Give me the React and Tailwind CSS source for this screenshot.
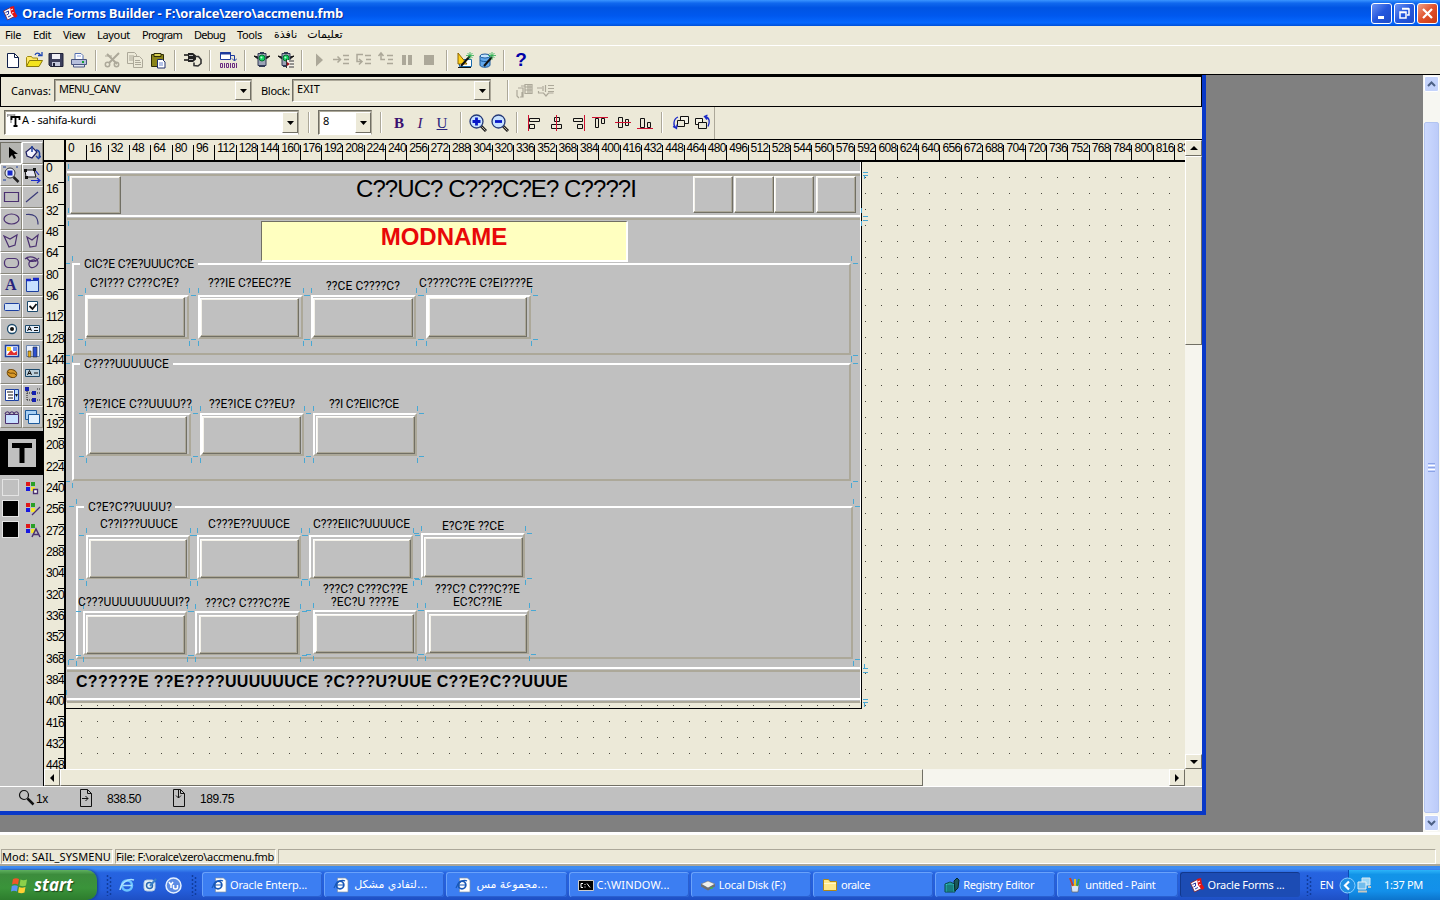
import { useLayoutEffect, useRef, useState } from 'react';

const UI = "font-['Noto_Sans','DejaVu_Sans',sans-serif] text-[11px]";

// Single line of text whose tracking is adjusted so it spans `w` pixels
function Fit({ w, className = '', children }) {
  const ref = useRef(null);
  const [spacing, setSpacing] = useState(0);
  useLayoutEffect(() => {
    const natural = ref.current.getBoundingClientRect().width;
    setSpacing((w - natural) / children.length);
  }, []);
  return (
    <span ref={ref} className={`inline-block whitespace-pre ${className}`} style={{ letterSpacing: spacing }}>
      {children}
    </span>
  );
}

function Svg({ w = 18, h = 18, className = '', children }) {
  return (
    <svg width={w} height={h} viewBox={`0 0 ${w} ${h}`} className={`shrink-0 ${className}`} fill="none">
      {children}
    </svg>
  );
}

function Sep({ className = '' }) {
  return <div className={`h-[21px] w-[2px] shrink-0 border-l border-[#aca899] bg-white ${className}`} />;
}

function OracleIcon({ className = '' }) {
  return (
    <Svg w={16} h={16} className={className}>
      <path d="M1.500 6l8-4 4 9-8 4z" fill="#f8f8ff" stroke="#7a2030" strokeWidth=".8" />
      <path d="M8 2l4-1 1 6 2.500 4-2.500 2-4-5z" fill="#e21313" />
      <path d="M3.500 7.500l3-1.500v3l-2 1M6 12l3-1.500" stroke="#2b3aa0" />
      <path d="M9 5l2-1M10 8l1.500-.5" stroke="#fff" />
    </Svg>
  );
}

function TitleBar() {
  return (
    <div className="flex h-[26px] items-center bg-[linear-gradient(#3a95ff_0%,#1068ee_12%,#0054e3_30%,#0058ee_60%,#0668ff_88%,#0050d8_100%)] pl-[2px]">
      <OracleIcon />
      <Fit w={321} className="ml-1 font-['Open_Sans',sans-serif] text-[13px] leading-[26px] font-bold text-white [text-shadow:1px_1px_0_#0a2c90]">
        {'Oracle Forms Builder - F:\\oralce\\zero\\accmenu.fmb'}
      </Fit>
      <div className="mr-[2px] ml-auto flex gap-[2px]">
        <div className="flex h-[21px] w-[21px] items-center justify-center rounded-[3px] border border-white bg-[linear-gradient(135deg,#6d94f4,#2457dd_50%,#1f4cc8)]">
          <Svg w={15} h={15}><path d="M4 11.500h6" stroke="#fff" strokeWidth="3" /></Svg>
        </div>
        <div className="flex h-[21px] w-[21px] items-center justify-center rounded-[3px] border border-white bg-[linear-gradient(135deg,#6d94f4,#2457dd_50%,#1f4cc8)]">
          <Svg w={15} h={15}>
            <path d="M5 3h7v6h-2M5 2.500h7" stroke="#fff" strokeWidth="1.500" />
            <path d="M3 6h6v6H3zM3 6.500h6" stroke="#fff" strokeWidth="1.500" />
          </Svg>
        </div>
        <div className="flex h-[21px] w-[21px] items-center justify-center rounded-[3px] border border-white bg-[linear-gradient(135deg,#f0a088,#e0502a_50%,#c83a14)]">
          <Svg w={15} h={15}><path d="M3 3l9 9M12 3l-9 9" stroke="#fff" strokeWidth="2.200" /></Svg>
        </div>
      </div>
    </div>
  );
}

const menus = [['File', 16], ['Edit', 18], ['View', 22], ['Layout', 33], ['Program', 40], ['Debug', 31], ['Tools', 25]];

function MenuBar() {
  return (
    <div className={`flex h-5 items-center gap-3 border-b border-white pb-[2px] pl-[5px] leading-[17px] text-black ${UI}`}>
      {menus.map(([name, w]) => <Fit key={name} w={w}>{name}</Fit>)}
      <span dir="rtl" className="font-['DejaVu_Sans',sans-serif] text-[11px]">نافذة</span>
      <span dir="rtl" className="-ml-[2px] font-['DejaVu_Sans',sans-serif] text-[11px]">تعليمات</span>
    </div>
  );
}

function TrafficLight() {
  return (
    <>
      <path d="M1 5l4 1v2zM17 5l-4 1v2z" fill="#111" stroke="#111" />
      <path d="M5 2.500h8v12H5z" fill="#9ca3b6" stroke="#333a55" />
      <path d="M7 1.500h4M6 15.500h6" stroke="#333a55" />
      <circle cx="9" cy="7" r="3" fill="#14d264" stroke="#04742c" />
      <circle cx="8.400" cy="6.400" r="1" fill="#b8ffd0" />
    </>
  );
}

function StepIcon({ d }) {
  return (
    <Svg className="ml-1">
      <path d="M11 4.500h6M12 8.500h5M11 12.500h6" stroke="#aca899" strokeWidth="1.500" />
      <path d={d} stroke="#aca899" strokeWidth="1.500" />
    </Svg>
  );
}

function MainToolbar() {
  return (
    <div className="flex h-7 items-center">
      <Svg className="ml-1">
        <path d="M3.500 2.500h7l4 4v10h-11z" fill="#fff" stroke="#10204a" />
        <path d="M10.500 2.500v4h4" stroke="#10204a" />
      </Svg>
      <Svg className="ml-[3px]">
        <path d="M1.500 15V6.500l1-1h4l1 1.500h5V9" fill="#ffe96a" stroke="#a08a10" />
        <path d="M1.500 15.500l3-6h13l-3.500 6z" fill="#f4e41c" stroke="#8a7a08" />
        <path d="M10 4c1-2.500 4-2.500 5.500 0M13 4.500h4V1" stroke="#1c46b4" strokeWidth="1.300" />
      </Svg>
      <Svg className="ml-1">
        <path d="M2 2.500h14v13H3.500L2 14z" fill="#3c3f5c" stroke="#202238" />
        <path d="M5 3h8v5H5z" fill="#f0f0f6" />
        <path d="M5 11h8v4H5z" fill="#c4c8dc" />
        <path d="M7 12v3" stroke="#202238" strokeWidth="2" />
      </Svg>
      <Svg className="ml-[5px]">
        <path d="M5 8V2.500h6l2 2V8" fill="#fff" stroke="#5570b0" />
        <path d="M1.500 8.500h15v5h-15z" fill="#b6bfdc" stroke="#4a5680" />
        <path d="M3.500 13.500h11v2.500h-11z" fill="#e2e6f4" stroke="#4a5680" />
        <path d="M12 11h2" stroke="#14a034" strokeWidth="2" />
        <path d="M7 5h4" stroke="#88a0e0" />
      </Svg>
      <Sep className="ml-[7px]" />
      <Svg className="ml-[6px]">
        <path d="M16 2L6 12M4 3l10 10" stroke="#aca899" strokeWidth="2" />
        <circle cx="4.500" cy="13.500" r="2.200" stroke="#aca899" strokeWidth="1.500" />
        <circle cx="13.500" cy="13.500" r="2.200" stroke="#aca899" strokeWidth="1.500" />
        <path d="M2 5h7" stroke="#aca899" />
      </Svg>
      <Svg className="ml-[5px]">
        <path d="M1.500 1.500h7l2 2v9h-9zM3 5h5M3 7h5M3 9h4" stroke="#aca899" />
        <path d="M7.500 5.500h6l3 3v8h-9z" fill="#ece9d8" stroke="#aca899" />
        <path d="M9 9.500h5M9 11.500h6M9 13.500h6" stroke="#aca899" />
      </Svg>
      <Svg className="ml-[5px]">
        <path d="M2.500 3.500h12v12h-12z" fill="#8a8418" stroke="#2e2c08" />
        <path d="M5 2.500h7v3H5z" fill="#d8cf50" stroke="#2e2c08" />
        <path d="M8.500 8.500h5l2.500 2.500v6H8.500z" fill="#fff" stroke="#20306c" />
        <path d="M10 12h4M10 14h4" stroke="#6b86d0" />
      </Svg>
      <Sep className="ml-[7px]" />
      <Svg className="ml-2">
        <path d="M0 4h5M0 9h5" stroke="#111" strokeWidth="1.500" />
        <path d="M4 2h5l3 2.500v4L9 11H4z" fill="#222" />
        <path d="M11 5.500h3.500l2.500 3v4l-3 2.500-4-.5v-3" stroke="#333" strokeWidth="1.600" />
        <path d="M5 4.500h4M5 8.500h4" stroke="#bbb" />
      </Svg>
      <Sep className="ml-[7px]" />
      <Svg className="ml-2">
        <path d="M1.500 1.500h10v7h-10z" fill="#fff" stroke="#1c3a9c" />
        <path d="M1 2.500h11" stroke="#1c3a9c" strokeWidth="2" />
        <path d="M12 4.500h3.500v5M13 7.500l2.500 2.500L18 7.500" stroke="#1c3a9c" />
        <path d="M1.500 12.500h2v4h-2zM7.500 12.500h2v4h-2zM13.500 12.500h2v4h-2zM5.500 12v5M11.500 12v5M17.500 12v5" stroke="#6a2a80" />
      </Svg>
      <Sep className="ml-[7px]" />
      <Svg className="ml-[7px]"><TrafficLight /></Svg>
      <Svg className="ml-[6px]">
        <TrafficLight />
        <path d="M9 9h8v8H9z" fill="#f4f2ea" />
        <path d="M9.500 8v9M12 10h5M13 13h4M12 16h5" stroke="#333" />
        <path d="M10 11l3 2-3 2z" fill="#a01020" />
      </Svg>
      <Sep className="ml-[6px]" />
      <Svg className="ml-[7px]"><path d="M6 2.500l7 6.500-7 6.500z" fill="#aca899" /></Svg>
      <StepIcon d="M1 8.500h7M5.500 5.500l3 3-3 3" />
      <StepIcon d="M9 3.500H3v7h5M5 8l3 2.500L5 13.500" />
      <StepIcon d="M9 8.500H5v-6M2.500 5L5 2l2.500 3" />
      <Svg className="ml-1"><path d="M6 4v10M12 4v10" stroke="#aca899" strokeWidth="4" /></Svg>
      <Svg className="ml-1"><path d="M4 4h10v10H4z" fill="#aca899" /></Svg>
      <Sep className="ml-2" />
      <Svg className="ml-2">
        <path d="M3.500 8.500h12v7h-12z" fill="#fff" stroke="#1c6cac" />
        <path d="M2 2v11h9z" fill="#ffd21a" stroke="#8c6400" />
        <path d="M5 15L14 5" stroke="#111" strokeWidth="2" />
        <path d="M14 1v8M10 4.500h8M11.500 2l5 5M16.500 2l-5 5" stroke="#2cb050" strokeWidth=".8" />
        <path d="M2 16.500h13" stroke="#111" />
      </Svg>
      <Svg className="ml-1">
        <path d="M2 5v9c0 3 10 3 10 0V5" fill="#62a8ec" stroke="#1c5a9c" />
        <ellipse cx="7" cy="5" rx="5" ry="2" fill="#c4e4ff" stroke="#1c5a9c" />
        <path d="M2 9c1 2 9 2 10 0" stroke="#1c5a9c" />
        <path d="M6 15l8-9" stroke="#111" strokeWidth="2" />
        <path d="M14 1v8M10 4.500h8M11.500 2l5 5M16.500 2l-5 5" stroke="#2cb050" strokeWidth=".8" />
      </Svg>
      <Sep className="ml-[7px]" />
      <span className="ml-[7px] w-[18px] text-center font-['Liberation_Sans',sans-serif] text-[19px] leading-5 font-bold text-[#0000a8]">?</span>
    </div>
  );
}

function Combo({ className = '', children }) {
  return (
    <div className={`flex border border-t-[#716f64] border-l-[#716f64] border-r-[#aca899] border-b-white shadow-[inset_1px_1px_0_#aca899] ${className}`}>
      <div className="flex-1 pl-1 leading-[17px]">{children}</div>
      <div className="my-[1px] flex w-4 items-center justify-center border border-t-white border-r-[#716f64] border-b-[#716f64] border-l-white bg-[#ece9d8]">
        <Svg w={7} h={4}><path d="M0 0h7L3.500 4z" fill="#000" /></Svg>
      </div>
    </div>
  );
}

function CanvasBar() {
  return (
    <div className={`flex h-8 items-center border-t-2 border-r border-b border-l border-black pb-[2px] pl-[10px] ${UI}`}>
      <Fit w={40} className="mt-[2px]">Canvas:</Fit>
      <Combo className="ml-[3px] h-[23px] w-[198px]"><Fit w={61}>MENU_CANV</Fit></Combo>
      <Fit w={29} className="mt-[2px] ml-[9px]">Block:</Fit>
      <Combo className="ml-[2px] h-[23px] w-[199px]"><Fit w={23}>EXIT</Fit></Combo>
      <Sep className="ml-[16px]" />
      <Svg className="ml-[7px]">
        <path d="M2 6h5v9H4M1 8v6l2 2M9 2.500h7v9H9zM9 5h7M9 8h7M12 3v9M14 3v9M5 4h4M6 10v5" stroke="#aca899" strokeWidth="1.200" />
      </Svg>
      <Svg className="ml-[3px]">
        <path d="M0 6h5M8.500 3v7M11 3.500h6M11 6.500h6M11 9.500h6M1.500 9v2h5l2.500 3 2.500-3h5M6 4v5" stroke="#aca899" strokeWidth="1.200" />
      </Svg>
    </div>
  );
}

function Magnifier({ plus, className }) {
  return (
    <Svg className={className}>
      <path d="M12 12l5 5" stroke="#222" strokeWidth="3" />
      <path d="M12.500 12.500l4 4" stroke="#b8b0a0" />
      <circle cx="7.500" cy="7.500" r="6.500" fill="#c8e2ff" stroke="#253a78" strokeWidth="1.300" />
      <path d={plus ? 'M3.500 7.500h8M7.500 3.500v8' : 'M4 7.500h7'} stroke="#0818c8" strokeWidth="2.800" />
    </Svg>
  );
}

function AlignIcon({ boxes, line, className }) {
  return (
    <Svg className={className}>
      <path d={boxes} stroke="#111" fill="#ece9d8" />
      <path d={line} stroke="#d01030" />
    </Svg>
  );
}

const styleBtn = "w-[18px] text-center font-['Liberation_Serif',serif] text-[15px] leading-[18px] font-bold";

function FormatBar() {
  return (
    <div className={`flex h-[33px] border-b border-black ${UI}`}>
      <div className="flex w-[715px] items-center border-r border-[#aca899] pb-px pl-1">
        <Combo className="h-[25px] w-[295px] bg-white">
          <div className="flex items-center">
            <Svg w={14} h={16} className="-ml-[2px]">
              <path d="M0 3h8M4 3v8M.5 2v3M7.500 2v3" stroke="#999" strokeWidth="1.500" />
              <path d="M4 5h9M8.500 5v9M4.500 4v4M12.500 4v4M6.500 14h4" stroke="#000" strokeWidth="1.800" />
            </Svg>
            <Fit w={74} className="ml-[1px]">A - sahifa-kurdi</Fit>
          </div>
        </Combo>
        <Sep className="ml-[9px]" />
        <Combo className="ml-2 h-[25px] w-[54px] bg-white"><span className="text-[11px] leading-[20px]">8</span></Combo>
        <Sep className="ml-2" />
        <span className={`ml-2 text-[#3a1070] ${styleBtn}`}>B</span>
        <span className={`ml-[3px] font-normal! text-[#3a1070] italic ${styleBtn}`}>I</span>
        <span className={`ml-1 font-normal! text-[#28247c] underline ${styleBtn}`}>U</span>
        <Sep className="ml-[9px]" />
        <Magnifier plus className="ml-[7px]" />
        <Magnifier className="ml-1" />
        <Sep className="ml-[7px]" />
        <AlignIcon className="ml-[7px]" boxes="M4.500 4.500h10v3h-10zM4.500 10.500h5v4h-5z" line="M3.500 1v16" />
        <AlignIcon className="ml-[5px]" boxes="M6.500 3.500h5v4h-5zM3.500 10.500h10v4h-10z" line="M8.500 1v16" />
        <AlignIcon className="ml-1" boxes="M3.500 4.500h9v3h-9zM7.500 10.500h5v4h-5z" line="M14.500 1v16" />
        <AlignIcon className="ml-[3px]" boxes="M4.500 4.500h3v9h-3zM10.500 4.500h3v5h-3z" line="M1 3.500h16" />
        <AlignIcon className="ml-[5px]" boxes="M4.500 3.500h4v10h-4zM11.500 5.500h3v6h-3z" line="M1 8.500h16" />
        <AlignIcon className="ml-1" boxes="M4.500 4.500h4v9h-4zM11.500 8.500h3v5h-3z" line="M1 14.500h16" />
        <Sep className="ml-[7px]" />
        <Svg className="ml-[9px]">
          <path d="M8.500 2.500h8v7h-8z" fill="#f4f2e6" stroke="#111" />
          <path d="M5.500 6.500h7v6h-7z" fill="#ece9d8" stroke="#111" />
          <path d="M6 3C1 5 1 12 4 14M1 12.500l3.500 2 .5-4" stroke="#1828c8" strokeWidth="1.300" />
        </Svg>
        <Svg className="ml-[3px]">
          <path d="M2.500 4.500h7v6h-7z" fill="#f4f2e6" stroke="#111" />
          <path d="M5.500 8.500h8v6h-8z" fill="#ece9d8" stroke="#111" />
          <path d="M12 2.500c5 1 5 6 3 10M14.500 1l-3 1.500 2.500 3" stroke="#1828c8" strokeWidth="1.300" />
        </Svg>
      </div>
    </div>
  );
}

const P = '#4a3070';
const B = '#1c3fa0';

const tools = [
  <path d="M7 3v11l3-3 2 4 2-1-2-4h4z" fill="#000" />,
  <><path d="M3 8l6-5 5 5-5 6-5-2z" fill="#f4f4ff" stroke="#1c1c60" strokeWidth="1.200" /><path d="M9 2v6M13 6c4 0 4 4 3 7M13 12l2.500 2.500L18 12" stroke={B} strokeWidth="1.500" /></>,
  <><circle cx="8" cy="7" r="5" fill="#e8eef8" stroke="#333" /><path d="M5.500 4.500h5v5h-5z" fill="#1828c8" /><path d="M11.500 11l5 5" stroke="#222" strokeWidth="2.500" /><path d="M1 1h3M14 1h2M1 14h3" stroke="#1c3fa0" /></>,
  <><path d="M2 4h9l2 7H3z" fill="#e8e8f0" stroke="#111" /><path d="M12 4l4 5M8 14.500h8M14 12l3 2.500-3 2.500" stroke="#1828c8" strokeWidth="1.200" /><path d="M1 3h3v3H1zM10 2h3v3h-3zM2 10h3v3H2z" fill="#111" /></>,
  <path d="M2.500 4.500h14v9h-14z" stroke={P} strokeWidth="1.200" />,
  <path d="M3 14L15 4" stroke="#3a3a78" strokeWidth="1.200" />,
  <ellipse cx="9.500" cy="9" rx="7.500" ry="5" stroke={P} strokeWidth="1.200" />,
  <path d="M3 4.500c8-1 12 2 12 10" stroke="#3a3a78" strokeWidth="1.200" />,
  <path d="M2 4l6 3 7-4-2 10-6 2z" stroke={P} strokeWidth="1.200" />,
  <path d="M4 5l5 3 6-5-2 11-6 1z" stroke={P} strokeWidth="1.200" />,
  <rect x="2.500" y="4.500" width="14" height="9" rx="4" stroke={P} strokeWidth="1.200" />,
  <path d="M2 5c4-4 12-2 13 3 0 5-8 8-9 3s7-7 7-3M4 4c2 4 8 5 12 0" stroke={P} strokeWidth="1.200" />,
  null,
  <><path d="M3.500 4.500h12v11h-12z" fill="#c8e0ff" stroke={B} /><path d="M3 4h5M10 3h6" stroke="#1828c8" strokeWidth="2.500" /></>,
  <rect x="2.500" y="5.500" width="15" height="7" rx="1" fill="#d4e4f8" stroke={B} />,
  <><path d="M4.500 3.500h10v10h-10z" fill="#fff" stroke="#1c4a6c" /><path d="M6.500 8l3 3 4-5" stroke="#111" strokeWidth="1.800" /></>,
  <><circle cx="10" cy="9" r="4.500" fill="#fff" stroke="#1c4a6c" strokeWidth="1.300" /><circle cx="10" cy="9" r="2" fill="#111" /></>,
  <><path d="M2.500 5.500h14v7h-14z" fill="#e4eefa" stroke="#1c4a6c" /><path d="M4.500 11l2-4.500 2 4.500M5 9.500h3M11 7.500h4M11 10.500h4" stroke="#111" /></>,
  <><path d="M3.500 3.500h13v11h-13z" fill="#fff" stroke={B} strokeWidth="1.500" /><path d="M5 13l4-5 3 3 3-2v4z" fill="#e03030" /><path d="M5 5h4v4H5z" fill="#ffd21a" /><path d="M11 5h4v4h-4z" fill="#6b8cf0" /></>,
  <><path d="M3.500 3.500h13v11h-13z" fill="#e8f0ff" stroke="#6b86b0" /><path d="M5 9h3v6H5z" fill="#e8b020" stroke="#222" strokeWidth=".6" /><path d="M10 5h4v10h-4z" fill="#2c50d0" stroke="#222" strokeWidth=".6" /></>,
  <><ellipse cx="10" cy="9.500" rx="5" ry="3.800" transform="rotate(25 10 9.500)" fill="#d89828" stroke="#6c4404" /><path d="M6 8c3 3 5-1 8 3" stroke="#6c4404" /></>,
  <><path d="M2.500 5.500h14v7h-14z" fill="#bcd0dc" stroke="#1c4a6c" /><path d="M4.500 11l2-4.500 2 4.500M5 9.500h3M11 9h4" stroke="#111" /></>,
  <><path d="M3.500 3.500h9v11h-9z" fill="#fff" stroke={B} /><path d="M12.500 3.500h4v11h-4z" fill="#b8dcf8" stroke={B} /><path d="M5 6h6M6 9h5M6 12h5" stroke="#111" /><path d="M13 8h3l-1.500 3z" fill="#111" /></>,
  <><path d="M2 1h4v4H2zM9 5h4v4H9zM9 12h4v4H9z" fill="#1420b0" /><path d="M4 5v9M4 7h5M4 14h5M14 3h3M14 7h3M14 14h3" stroke="#222" strokeDasharray="1 1" /></>,
  <><path d="M3.500 6.500h13v9h-13z" fill="#c8e0ff" stroke={P} /><path d="M3 6c1-3 4-3 4.500 0 1-3 4-3 4.500 0 1-3 4-3 4.500 0" stroke={P} strokeWidth="1.200" /></>,
  <><path d="M2.500 2.500h11v9h-11z" fill="#a8d0f4" stroke="#1c5a9c" /><path d="M5.500 6.500h11v9h-11z" fill="#e0f0ff" stroke="#1c5a9c" /></>,
];

function Swatch({ className, children }) {
  return (
    <div className="flex h-[21px] items-center">
      <div className={`ml-[2px] h-[17px] w-[17px] border border-[#e4e4e4] ${className}`} />
      <Svg w={16} className="ml-[6px]">
        <path d="M1 3h4v4H1z" fill="#e01818" />
        <path d="M6 3h4v4H6z" fill="#28a028" />
        <path d="M1 8h4v4H1z" fill="#1818e0" />
        <path d="M6 8h4v4H6z" fill="#f4e430" />
        {children}
      </Svg>
    </div>
  );
}

function Palette() {
  return (
    <div className="w-[44px] shrink-0 border-r border-black bg-[#c0c0c0] pt-[2px]">
      <div className="grid grid-cols-2">
        {tools.map((icon, i) => (
          <div
            key={i}
            className={`flex h-[22px] items-center justify-center overflow-hidden border ${i === 0 ? 'border-t-[#716f64] border-r-white border-b-white border-l-[#716f64] bg-[#b4b4b0]' : 'border-t-white border-r-[#8a887c] border-b-[#8a887c] border-l-white'}`}
          >
            {icon ? <Svg>{icon}</Svg> : <span className="font-['Liberation_Serif',serif] text-[16px] leading-none font-bold text-[#28247c]">A</span>}
          </div>
        ))}
      </div>
      <div className="mt-[3px] flex h-[44px] items-center justify-center bg-black">
        <div className="flex h-7 w-7 items-center justify-center bg-[#c0c0c0]">
          <Svg w={20} h={20}><path d="M0 2.500h20M10 0v20" stroke="#000" strokeWidth="5" /></Svg>
        </div>
      </div>
      <div className="pt-[2px]">
        <Swatch className="bg-[#c0c0c0]"><path d="M8.500 10.500h4v4h-4z" fill="#fff" stroke={P} strokeWidth="1.300" /></Swatch>
        <Swatch className="bg-black"><path d="M7 15l8-8" stroke={P} strokeWidth="1.300" /></Swatch>
        <Swatch className="bg-black"><path d="M7 16l4-8 4 8M8.500 13.500h5" stroke={P} strokeWidth="1.500" /></Swatch>
      </div>
    </div>
  );
}

const sans = "font-['Liberation_Sans',sans-serif] text-[12px]";
const columns = Array.from({ length: 53 }, (_, i) => i * 16);
const rows = Array.from({ length: 29 }, (_, i) => i * 16);

function RulerTop() {
  return (
    <div className="flex h-[22px] border-b-2 border-black">
      <div className="w-[21px] shrink-0 border-r border-black" />
      <div className="flex flex-1 overflow-hidden">
        {columns.map((n) => (
          <div key={n} className="flex w-[21.333px] shrink-0 items-end">
            <div className={`w-px shrink-0 bg-black ${n ? 'h-[15px]' : 'h-5'}`} />
            <span className={`ml-[2px] self-start leading-[17px] tracking-[-0.67px] ${sans}`}>{n}</span>
          </div>
        ))}
      </div>
    </div>
  );
}

function RulerLeft() {
  return (
    <div className="relative w-[22px] shrink-0 overflow-hidden border-r-2 border-black">
      <div className="-mt-px">
        {rows.map((n) => (
          <div key={n} className="relative h-[21.333px] pl-[2px]">
            {n > 0 && <div className="absolute top-0 right-0 h-px w-[6px] bg-black" />}
            <span className={`block pt-[1px] leading-[12px] tracking-[-0.67px] ${sans}`}>{n}</span>
          </div>
        ))}
      </div>
      <div className="absolute top-[252px] left-0 w-full border-t border-dashed border-black" />
    </div>
  );
}

// outer bevel x1, y1, x2, y2 then inner button x1, y1, x2, y2 (screen units)
const buttons = [
  [85, 295, 189, 339, 86, 297, 185, 337],
  [198, 295, 303, 339, 200, 298, 299, 337],
  [311, 295, 416, 339, 313, 298, 413, 337],
  [426, 295, 531, 339, 428, 297, 527, 337],
  [86, 413, 191, 456, 89, 416, 187, 454],
  [200, 413, 304, 456, 202, 416, 301, 454],
  [313, 413, 417, 456, 316, 416, 415, 454],
  [86, 535, 190, 579, 89, 539, 187, 578],
  [197, 535, 301, 579, 200, 539, 299, 578],
  [309, 535, 413, 579, 313, 539, 411, 578],
  [421, 533, 525, 578, 424, 537, 523, 577],
  [83, 611, 187, 655, 86, 615, 185, 654],
  [195, 611, 300, 655, 199, 615, 298, 654],
  [313, 610, 417, 654, 315, 614, 414, 653],
  [425, 610, 529, 654, 429, 614, 527, 653],
];

// text, left, vertical centre, width
const labels = [
  ['CIC?E C?E?UUUC?CE', 84, 264, 110],
  ['C?I??? C???C?E?', 90, 283, 89],
  ['???IE C?EEC??E', 208, 283, 83],
  ['??CE C????C?', 326, 286, 74],
  ['C????C??E C?EI????E', 419, 283, 114],
  ['C????UUUUUCE', 84, 364, 85],
  ['??E?ICE C??UUUU??', 83, 404, 109],
  ['??E?ICE C??EU?', 209, 404, 86],
  ['??I C?EIIC?CE', 329, 404, 70],
  ['C?E?C??UUUU?', 88, 507, 84],
  ['C??I???UUUCE', 100, 524, 78],
  ['C???E??UUUCE', 208, 524, 82],
  ['C???EIIC?UUUUCE', 313, 524, 97],
  ['E?C?E ??CE', 442, 526, 62],
  ['C???UUUUUUUUUI??', 78, 602, 112],
  ['???C? C???C??E', 205, 603, 85],
  ['???C? C???C??E', 323, 589, 85],
  ['?EC?U ????E', 331, 602, 68],
  ['???C? C???C??E', 435, 589, 85],
  ['EC?C??IE', 453, 602, 49],
];

const frames = [
  { box: [72, 263, 851, 355], gap: [80, 198] },
  { box: [72, 363, 851, 481], gap: [80, 173] },
  { box: [76, 506, 853, 659], gap: [84, 175] },
];

const OX = 66;
const OY = 162;
const at = (x1, y1, x2, y2) => ({ left: x1 - OX, top: y1 - OY, width: x2 - x1, height: y2 - y1 });

// selection handles around a rectangle
const handles = ([a, b, c, d]) =>
  `M${a + 0.5} ${b - 7}v5M${a - 7} ${b + 0.5}h5M${c + 0.5} ${b - 7}v5M${c + 2} ${b + 0.5}h5` +
  `M${a + 0.5} ${d + 2}v5M${a - 7} ${d + 0.5}h5M${c + 0.5} ${d + 2}v5M${c + 2} ${d + 0.5}h5`;

const topButtons = [
  [70, 176, 121, 214],
  [693, 176, 733, 213],
  [734, 176, 774, 213],
  [774, 176, 814, 213],
  [816, 176, 856, 213],
];

const pushButton = 'absolute border border-t-white border-r-[#716f64] border-b-[#716f64] border-l-white shadow-[inset_-1px_-1px_0_#aca899,inset_1px_1px_0_#f4f2ea]';

function FormCanvas() {
  return (
    <div className="relative flex-1 overflow-hidden bg-[#ece9d8] bg-[radial-gradient(circle_at_0.5px_0.5px,#4c4a40_0.6px,transparent_0.8px)] bg-[length:16px_16px] bg-[position:15px_15px]">
      <div className="absolute top-0 left-0 h-[547px] w-[796px] border-r border-b border-black" />
      <div className="absolute top-0 left-0 h-[540px] w-[795px] border-r border-white bg-[#c0c0c0]" />
      {[171, 215, 667, 698].map((y) => (
        <div key={y} className="absolute h-[5px] border-t-2 border-b-2 border-t-white border-b-[#aca899]" style={{ left: 1, top: y - OY, width: 793 }} />
      ))}
      {topButtons.map((b) => <div key={b[0]} className={pushButton} style={at(...b)} />)}
      <Fit w={280} className="absolute top-[13px] left-[290px] font-['Liberation_Sans',sans-serif] text-[24px] leading-7">
        C??UC? C???C?E? C????I
      </Fit>
      <div className="absolute top-[59px] left-[195px] h-[41px] w-[367px] border-t border-r-2 border-b-2 border-l border-t-[#716f64] border-r-white border-b-white border-l-[#716f64] bg-[#ffffc0] text-center font-['Liberation_Sans',sans-serif] text-[24px] leading-[30px] font-bold text-[#e80808]">
        MODNAME
      </div>
      {frames.map(({ box, gap }) => (
        <div key={box[1]}>
          <div className="absolute border-t-2 border-r-2 border-b-2 border-l-2 border-t-white border-r-[#aca899] border-b-[#aca899] border-l-white" style={at(...box)} />
          <div className="absolute bg-[#c0c0c0]" style={at(gap[0], box[1], gap[1], box[1] + 2)} />
        </div>
      ))}
      {buttons.map(([a, b, c, d, e, f, g, h]) => (
        <div key={`${a}-${b}`}>
          <div className="absolute border-t-2 border-r-2 border-b-2 border-l-2 border-t-white border-r-[#aca899] border-b-[#aca899] border-l-white" style={at(a, b, c, d)} />
          <div className={pushButton} style={at(e, f, g, h)} />
        </div>
      ))}
      <svg className="absolute top-0 left-0" width="1118" height="607" viewBox="66 162 1118 607" fill="none">
        <g stroke="#48a8d4">
          {buttons.map((b) => <path key={`${b[0]}-${b[1]}`} d={handles(b)} />)}
          {frames.map(({ box }) => <path key={box[1]} d={handles(box)} />)}
          <path d="M68.500 164v5M68.500 176v5M68.500 208v5M68.500 221v5M68.500 660v5M66.500 690v5M863 172.500h5M863 175.500h5M864.500 176v3M861.500 208v5M863 216.500h5M863 220.500h5M861.500 221v5M863 668.500h5M863 672.500h5M864.500 664v4M863 699.500h5M863 702.500h5M864.500 703v4" />
        </g>
      </svg>
      {labels.map(([text, x, y, w]) => (
        <span key={`${x}-${y}`} className="absolute flex" style={{ left: x - OX, top: y - OY - 7 }}>
          <Fit w={w} className="font-['Roboto',sans-serif] text-[12px] leading-[14px]">{text}</Fit>
        </span>
      ))}
      <Fit w={492} className="absolute top-[510px] left-[10px] font-['Liberation_Sans',sans-serif] text-[16px] leading-5 font-bold">
        C?????E ??E????UUUUUUCE ?C???U?UUE C??E?C??UUUE
      </Fit>
    </div>
  );
}

const raised = 'border border-t-white border-r-[#716f64] border-b-[#716f64] border-l-white bg-[#ece9d8]';

function ScrollBtn({ d, className }) {
  return (
    <div className={`flex shrink-0 items-center justify-center ${raised} ${className}`}>
      <Svg w={8} h={8}><path d={d} fill="#000" /></Svg>
    </div>
  );
}

function EditorBody() {
  return (
    <div className="flex h-[646px]">
      <Palette />
      <div className="flex min-w-0 flex-1 flex-col">
        <div className="flex h-[629px]">
          <div className="flex min-w-0 flex-1 flex-col">
            <RulerTop />
            <div className="flex min-h-0 flex-1">
              <RulerLeft />
              <FormCanvas />
            </div>
          </div>
          <div className="flex w-[17px] shrink-0 flex-col bg-[#f6f5ee]">
            <ScrollBtn d="M0 6h8L4 2z" className="h-4" />
            <div className={`h-[189px] ${raised}`} />
            <ScrollBtn d="M0 2h8L4 6z" className="mt-auto h-[15px]" />
          </div>
        </div>
        <div className="flex h-[17px]">
          <div className="flex w-[1141px] bg-[#f6f5ee]">
            <ScrollBtn d="M6 0v8L2 4z" className="w-4" />
            <div className={`w-[863px] ${raised}`} />
            <ScrollBtn d="M2 0v8l4-4z" className="ml-auto w-4" />
          </div>
        </div>
      </div>
    </div>
  );
}

function EditorStatus() {
  return (
    <div className={`flex h-[25px] items-center border-t border-white bg-[#c0c0c0] ${sans}`}>
      <Svg w={17} h={17} className="-mt-1 ml-[18px]">
        <circle cx="6" cy="6" r="4.500" stroke="#111" strokeWidth="1.200" />
        <path d="M9.500 9.500l6 6" stroke="#111" strokeWidth="2.500" />
      </Svg>
      <Fit w={12} className="ml-px">1x</Fit>
      <Svg w={14} className="-mt-[2px] ml-[31px]">
        <path d="M1.500.5h7l4 4v13h-11zM8.500.5v4h4M3 9.500h6M6.500 7l2.500 2.500L6.500 12" stroke="#111" />
      </Svg>
      <Fit w={34} className="ml-[14px]">838.50</Fit>
      <Svg w={14} className="-mt-[2px] ml-[31px]">
        <path d="M1.500.5h7l4 4v13h-11zM8.500.5v4h4M6.500 0v9M4 6.500L6.500 9 9 6.500" stroke="#111" />
      </Svg>
      <Fit w={34} className="ml-[14px]">189.75</Fit>
    </div>
  );
}

function OuterScroll() {
  return (
    <div className="ml-auto flex w-[17px] flex-col items-center bg-[#f7f7f2] pt-[1px]">
      <div className="flex h-4 w-[15px] items-center justify-center rounded-[2px] border border-white bg-[#c4d3fb]">
        <Svg w={9} h={8}><path d="M1 6l3.500-3.500L8 6" stroke="#4d6185" strokeWidth="2" /></Svg>
      </div>
      <div className="mt-[30px] flex h-[691px] w-[15px] flex-col items-center justify-center gap-[1px] rounded-[2px] border border-[#b2c4f0] bg-[linear-gradient(90deg,#ccd9fe,#bccbf9)]">
        <div className="h-px w-[7px] bg-[#8ca4e8]" />
        <div className="h-px w-[7px] bg-white" />
        <div className="h-px w-[7px] bg-[#8ca4e8]" />
        <div className="h-px w-[7px] bg-white" />
        <div className="h-px w-[7px] bg-[#8ca4e8]" />
      </div>
      <div className="mt-[2px] flex h-4 w-[15px] items-center justify-center rounded-[2px] border border-white bg-[#c4d3fb]">
        <Svg w={9} h={8}><path d="M1 2l3.500 3.500L8 2" stroke="#4d6185" strokeWidth="2" /></Svg>
      </div>
    </div>
  );
}

const cell = 'h-[15px] border border-t-[#aca899] border-r-white border-b-white border-l-[#aca899] leading-[13px]';

function StatusBar() {
  return (
    <div className={`flex h-[34px] flex-col border-t-[3px] border-b-[2px] border-t-white border-b-[#aca899] ${UI}`}>
      <div className="mt-[14px] flex gap-[2px] pl-[1px]">
        <div className={`w-[112px] ${cell}`}><Fit w={109}>Mod: SAIL_SYSMENU</Fit></div>
        <div className={`w-[161px] ${cell}`}><Fit w={158}>{'File: F:\\oralce\\zero\\accmenu.fmb'}</Fit></div>
        <div className={`mr-1 flex-1 ${cell}`} />
      </div>
    </div>
  );
}

function IePage() {
  return (
    <Svg w={16} h={16}>
      <path d="M4.500 1h8l2.500 2.500V15H4.500z" fill="#fff" stroke="#8090a8" strokeWidth=".7" />
      <circle cx="7" cy="8" r="3.800" stroke="#1858b8" strokeWidth="1.800" />
      <path d="M4 8h7M1 11C3 5 9 2 12 4" stroke="#1858b8" strokeWidth="1.200" />
    </Svg>
  );
}

const tasks = [
  { icon: <IePage />, name: 'Oracle Enterp...', w: 77 },
  { icon: <IePage />, name: 'لتفادي مشكل', rtl: true },
  { icon: <IePage />, name: 'مجموعة مس', rtl: true },
  { icon: <Svg w={16} h={16}><path d="M.5 3.500h15v10H.5z" fill="#000" stroke="#ccc" /><path d="M5 6.500H3v4h2M7 7v1M7 9.500v1M9 6.500l3 4" stroke="#fff" /></Svg>, name: 'C:\\WINDOW...', w: 73 },
  { icon: <Svg w={16} h={16}><path d="M1 7l7-3 7 3-7 4z" fill="#f0f0ec" stroke="#777" strokeWidth=".6" /><path d="M1 7v2.500l7 4 7-4V7l-7 4z" fill="#707070" /><path d="M10 11h3" stroke="#30d030" /></Svg>, name: 'Local Disk (F:)', w: 67 },
  { icon: <Svg w={16} h={16}><path d="M1.500 13.500v-11h5l1.500 2h6.500v9z" fill="#ffe88a" stroke="#b08818" /><path d="M2 6.500h12" stroke="#fff8cc" /></Svg>, name: 'oralce', w: 29 },
  { icon: <Svg w={16} h={16}><path d="M1 7l5-2 5 2v8H1z" fill="#30c8c8" stroke="#084848" /><path d="M1 11h10M6 6v9M4 6v9M8 6v9M1 9h10M1 13h10" stroke="#084848" strokeWidth=".7" /><path d="M10 4l3-3 2 2-1 8-3 3z" fill="#1c5858" stroke="#052828" /></Svg>, name: 'Registry Editor', w: 71 },
  { icon: <Svg w={16} h={16}><path d="M5 8h8l-1 7H6z" fill="#d8e4f4" stroke="#666" strokeWidth=".7" /><path d="M7 9L4 1" stroke="#d04020" strokeWidth="2" /><path d="M9 9V2" stroke="#e8c020" strokeWidth="2" /><path d="M11 9l2-7" stroke="#38a048" strokeWidth="2" /></Svg>, name: 'untitled - Paint', w: 70 },
  { icon: <OracleIcon />, name: 'Oracle Forms ...', w: 77, active: true },
];

function Grip({ className }) {
  return (
    <Svg w={6} h={22} className={className}>
      <path d="M1.500 1v21M4.500 3v19" stroke="#103c9c" strokeWidth="1.500" strokeDasharray="2 2" />
    </Svg>
  );
}

function Taskbar() {
  return (
    <div className={`flex h-[34px] bg-[linear-gradient(#3a8af0_0%,#3f8cf3_8%,#2663e0_20%,#245edb_70%,#1e4fc4_100%)] text-white ${UI}`}>
      <div className="mt-1 flex h-[30px] w-[97px] items-center rounded-r-[10px] bg-[linear-gradient(#5fb05f_0%,#3c8c3c_15%,#3a943a_60%,#2d7c2d_100%)] pl-[11px] shadow-[1px_0_3px_#123c80]">
        <Svg w={19} h={19}>
          <path d="M2 3c2-1 4-1 6 0L7 8.500c-2-1-4-1-6 0z" fill="#f0562a" />
          <path d="M9.500 3.500c2 1 4 1 6.500 0l-1 6c-2 1-4 1-6.500 0z" fill="#8cd04a" />
          <path d="M.8 10c2-1 4-1 6 0L6 15.500c-2-1-4-1-6 0z" fill="#5c94f8" />
          <path d="M8 11c2 1 4 1 6.500 0l-1 5.500c-2 1-4 1-6.500 0z" fill="#ffd034" />
        </Svg>
        <Fit w={39} className="ml-1 font-['Open_Sans',sans-serif] text-[17px] leading-6 font-bold italic [text-shadow:1px_1px_1px_#1c4a1c]">start</Fit>
      </div>
      <Grip className="mt-[8px] ml-[9px]" />
      <div className="flex items-center gap-[7px] pt-[4px] pl-[7px]">
        <Svg w={16} h={16}>
          <circle cx="8" cy="8.500" r="5" stroke="#6cc4ff" strokeWidth="2.500" />
          <path d="M4 8.500h9M1 13C2 6 9 1 15 3" stroke="#a8e0ff" strokeWidth="1.500" />
        </Svg>
        <Svg w={16} h={16}>
          <rect x="2" y="3" width="11" height="11" rx="3" fill="#e4f0f8" stroke="#b0c8e0" />
          <circle cx="7.500" cy="8.500" r="3" stroke="#2868b0" strokeWidth="1.500" />
          <path d="M8 9l6-7" stroke="#3a80c8" strokeWidth="2" />
        </Svg>
        <Svg w={17} h={17}>
          <circle cx="8.500" cy="8.500" r="7.500" fill="#5c8ce4" stroke="#e4f0ff" strokeWidth="1.500" />
          <path d="M4 5l2 3 2-3M6 8v3M8.500 8v2.500c0 2 4 2 4 0V8" stroke="#fff" strokeWidth="1.500" />
        </Svg>
      </div>
      <Grip className="mt-[8px] ml-[9px]" />
      <div className="mt-[6px] ml-[5px] flex h-[25px] gap-[2px]">
        {tasks.map(({ icon, name, w, rtl, active }) => (
          <div
            key={name}
            className={`flex w-[120.200px] items-center gap-[3px] rounded-[3px] border-t border-l pl-[8px] ${active ? 'border-[#12388c] bg-[#1c4cb4]' : 'border-[#6aa2fa] bg-[#3c7ef2] shadow-[inset_-1px_-1px_0_#2a60d0]'}`}
          >
            {icon}
            {rtl ? (
              <span dir="ltr" className="ml-[2px] font-['DejaVu_Sans',sans-serif] text-[11px] whitespace-nowrap">
                <bdi>{name}</bdi>{'\u200e...'}
              </span>
            ) : (
              <Fit w={w}>{name}</Fit>
            )}
          </div>
        ))}
      </div>
      <Grip className="mt-[8px] ml-[6px]" />
      <Fit w={14} className="ml-[8px] pt-[2px] leading-[34px]">EN</Fit>
      <div className="mt-[4px] ml-auto flex h-[30px] w-[92px] items-center border-l border-[#0a4cb4] bg-[linear-gradient(#2cb4f8_0%,#1294e8_15%,#1390ea_70%,#0c74cc_100%)]">
        <Svg w={17} h={17} className="-ml-[10px]">
          <circle cx="8.500" cy="8.500" r="7.500" fill="#2090e4" stroke="#8cd0ff" />
          <path d="M10 4.500l-4 4 4 4" stroke="#fff" strokeWidth="2.200" />
        </Svg>
        <Svg w={16} h={16}>
          <path d="M6 1h8v7H6z" fill="#9cd8f8" stroke="#dce8f0" />
          <path d="M2 5h8v7H2z" fill="#70bcec" stroke="#e8f0f4" />
          <path d="M2 14.500h9M12 10h3" stroke="#c8c8c0" strokeWidth="2" />
        </Svg>
        <Fit w={39} className="ml-[12px]">1:37 PM</Fit>
      </div>
    </div>
  );
}

export default function App() {
  return (
    <div className="flex h-[900px] w-[1440px] flex-col overflow-hidden bg-[#ece9d8] text-black">
      <TitleBar />
      <MenuBar />
      <MainToolbar />
      <div className="flex h-[758px] border-t border-black bg-[#808080]">
        <div className="h-[740px] w-[1206px] border-r-4 border-b-4 border-[#0838c8] bg-[#ece9d8]">
          <CanvasBar />
          <FormatBar />
          <EditorBody />
          <EditorStatus />
        </div>
        <OuterScroll />
      </div>
      <StatusBar />
      <Taskbar />
    </div>
  );
}
